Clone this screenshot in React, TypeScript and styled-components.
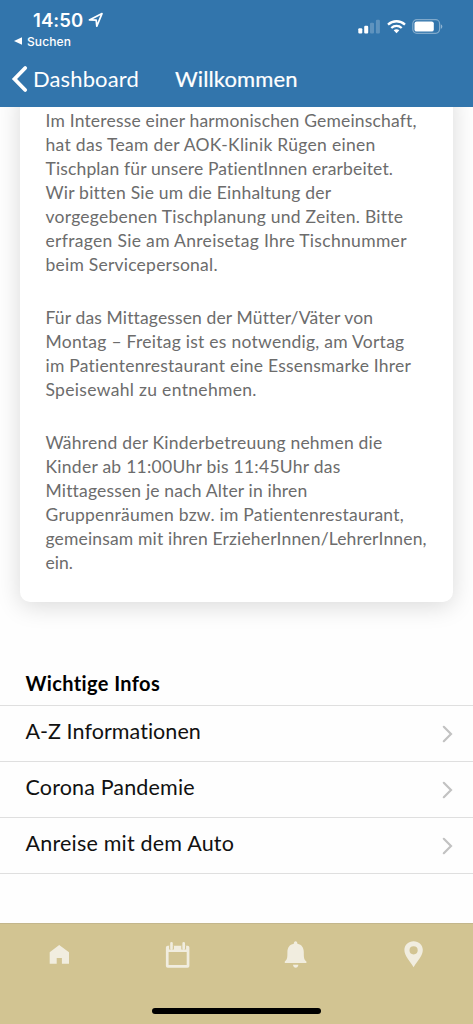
import React from "react";
import styled, { createGlobalStyle } from "styled-components";

const GlobalStyle = createGlobalStyle`
  * { box-sizing: border-box; }
  body { margin: 0; background: #fefefe; font-family: Lato, "Open Sans", sans-serif; }
`;

const Screen = styled.div`
  display: flex;
  flex-direction: column;
  height: 1024px;
  width: 473px;
  overflow: hidden;
  background: #fefefe;
`;

const Header = styled.header`
  flex: none;
  height: 107px;
  background: #3275ac;
  color: #fff;
`;

const StatusBar = styled.div`
  display: flex;
  justify-content: space-between;
  height: 50px;
  padding: 9px 30px 0 14px;
  font-family: Inter, sans-serif;
`;

const Clock = styled.div`
  display: flex;
  align-items: center;
  gap: 5px;
  height: 22px;
  padding-left: 19px;
  font-size: 18.5px;
  font-weight: 600;
  letter-spacing: 0.1px;
`;

const BackToApp = styled.div`
  display: flex;
  align-items: center;
  gap: 5px;
  height: 20px;
  font-size: 12px;
  font-weight: 500;
  letter-spacing: 0.1px;
`;

const StatusIcons = styled.div`
  display: flex;
  align-items: flex-start;
  padding-top: 10px;
  gap: 6px;
`;

const NavBar = styled.nav`
  display: flex;
  align-items: center;
  height: 57px;
  padding: 1px 0 0 11px;
  font-size: 22px;
  line-height: 28px;
`;

const BackLabel = styled.span`
  width: 142px;
  margin-left: 5px;
  letter-spacing: 0.12px;
`;

const Title = styled.h1`
  margin: 0;
  font-size: 22px;
  font-weight: 400;
  letter-spacing: 0.12px;
  -webkit-text-stroke: 0.2px #fff;
`;

const Content = styled.main`
  flex: 1;
  overflow: hidden;
`;

const Card = styled.article`
  margin: -20px 20px 0;
  padding: 22px 0 27px 25.5px;
  border-radius: 10px;
  background: #fff;
  box-shadow: 0 4px 24px rgba(0, 0, 0, 0.15);
`;

const Paragraph = styled.p`
  margin: 0;
  color: #6c6c6c;
  font-size: 17.5px;
  line-height: 24px;
  & + & { margin-top: 29px; }
`;

const Line = styled.span<{ $spacing: number }>`
  display: block;
  white-space: nowrap;
  letter-spacing: ${(p) => p.$spacing}px;
`;

const SectionTitle = styled.h2`
  margin: 67px 0 0;
  padding: 0 0 8px 25.5px;
  height: 37px;
  border-bottom: 1px solid #dfdfdf;
  font-size: 20px;
  font-weight: 700;
  line-height: 28px;
  letter-spacing: 0.38px;
  color: #000;
`;

const LinkRow = styled.div<{ $spacing: number }>`
  display: flex;
  align-items: center;
  justify-content: space-between;
  height: 56px;
  padding: 0 20px 6px 25.5px;
  border-bottom: 1px solid #dfdfdf;
  color: #111;
  font-size: 21.5px;
  letter-spacing: ${(p) => p.$spacing}px;
  svg { margin-top: 6px; }
`;

const TabBar = styled.footer`
  flex: none;
  height: 101px;
  border-top: 1px solid #c3b68c;
  background: #d2c492;
`;

const Tabs = styled.div`
  display: grid;
  grid-template-columns: repeat(4, 1fr);
  height: 84px;
`;

const Tab = styled.div`
  display: flex;
  justify-content: center;
  padding-top: 16px;
  color: #f1eddf;
`;

const HomeIndicator = styled.div`
  width: 169px;
  height: 6px;
  margin: 0 auto;
  border-radius: 3px;
  background: #000;
`;

const paragraphs: [string, number][][] = [
  [
    ["Im Interesse einer harmonischen Gemeinschaft,", 0.18],
    ["hat das Team der AOK-Klinik Rügen einen", 0.3],
    ["Tischplan für unsere PatientInnen erarbeitet.", 0.14],
    ["Wir bitten Sie um die Einhaltung der", 0.22],
    ["vorgegebenen Tischplanung und Zeiten. Bitte", 0.25],
    ["erfragen Sie am Anreisetag Ihre Tischnummer", 0.32],
    ["beim Servicepersonal.", 0.23],
  ],
  [
    ["Für das Mittagessen der Mütter/Väter von", 0.13],
    ["Montag – Freitag ist es notwendig, am Vortag", 0.26],
    ["im Patientenrestaurant eine Essensmarke Ihrer", 0.22],
    ["Speisewahl zu entnehmen.", 0.32],
  ],
  [
    ["Während der Kinderbetreuung nehmen die", 0.22],
    ["Kinder ab 11:00Uhr bis 11:45Uhr das", 0.26],
    ["Mittagessen je nach Alter in ihren", 0.17],
    ["Gruppenräumen bzw. im Patientenrestaurant,", 0.24],
    ["gemeinsam mit ihren ErzieherInnen/LehrerInnen,", 0.16],
    ["ein.", 0],
  ],
];

const links: [string, number][] = [
  ["A-Z Informationen", 0.06],
  ["Corona Pandemie", 0.15],
  ["Anreise mit dem Auto", 0.2],
];

const LocationIcon = () => (
  <svg width="16" height="16" viewBox="0 0 16 16" fill="none" stroke="#fff" strokeWidth="1.7" strokeLinejoin="round">
    <path d="M1.4 7.9 14 1.6 8.8 14.2 8.2 8.2Z" />
  </svg>
);

const SignalIcon = () => (
  <svg width="23" height="15" viewBox="0 0 23 15" fill="#fff">
    <rect x="0.3" y="9.2" width="4" height="5.3" rx="1.1" />
    <rect x="6.2" y="6.8" width="4" height="7.7" rx="1.1" />
    <rect x="12" y="3.8" width="4" height="10.7" rx="1.1" opacity="0.22" />
    <rect x="17.9" y="0.8" width="4" height="13.7" rx="1.1" opacity="0.22" />
  </svg>
);

const WifiIcon = () => (
  <svg width="19" height="15" viewBox="0 0 19 15" fill="none" stroke="#fff" strokeWidth="2.3">
    <path d="M1 5.7C5.8 1.1 13.2 1.1 18 5.7" />
    <path d="M4.3 9C7.3 6.2 11.7 6.2 14.7 9" />
    <path d="M6.7 11.3C8.3 9.9 10.7 9.9 12.3 11.3L9.5 14.2Z" fill="#fff" stroke="none" />
  </svg>
);

const BatteryIcon = () => (
  <svg width="31" height="15" viewBox="0 0 31 15">
    <rect x="0.8" y="0.7" width="26.8" height="13.6" rx="4" fill="none" stroke="#fff" strokeOpacity="0.38" strokeWidth="1.2" />
    <rect x="2.5" y="2.4" width="19.3" height="10.2" rx="2.2" fill="#fff" />
    <path d="M28.8 5.2C30.8 6 30.8 9 28.8 9.8Z" fill="#fff" fillOpacity="0.45" />
  </svg>
);

const BackIcon = () => (
  <svg width="17" height="28" viewBox="0 0 17 28" fill="none" stroke="#fff" strokeWidth="3.8" strokeLinecap="round" strokeLinejoin="miter">
    <path d="M14.2 3 3.5 14 14.2 25" />
  </svg>
);

const ChevronIcon = () => (
  <svg width="11" height="18" viewBox="0 0 11 18" fill="none" stroke="#c2c2c2" strokeWidth="2.2" strokeLinecap="round">
    <path d="M1.8 1.8 9 9 1.8 16.2" />
  </svg>
);

const HomeIcon = () => (
  <svg width="30" height="30" viewBox="0 0 30 30" fill="currentColor">
    <path d="M15.2 5 25 12.2V23.7H17.9V18H12.7V23.7H5.7V12.2Z" />
  </svg>
);

const CalendarIcon = () => (
  <svg width="30" height="30" viewBox="-0.7 0 30 30">
    <path
      fill="currentColor"
      fillRule="evenodd"
      d="M5 5.7H25Q26.7 5.7 26.7 7.4V26Q26.7 27.7 25 27.7H5Q3.2 27.7 3.2 26V7.4Q3.2 5.7 5 5.7ZM5.9 12V25H24V12Z"
    />
    <path d="M8.8 5.5V9.5M21 5.5V9.5" stroke="#d2c492" strokeWidth="4.8" />
    <path d="M8.8 3.3V8.6M21 3.3V8.6" stroke="currentColor" strokeWidth="2.6" strokeLinecap="round" />
  </svg>
);

const BellIcon = () => (
  <svg width="30" height="30" viewBox="0 0 30 30" fill="currentColor">
    <path d="M14.6 1.2C15.8 1.2 16.3 2 16.4 3.8C20.8 4.5 22.8 8 22.8 12.2C22.8 18 23 19.3 25.4 21.6V23H3.8V21.6C6.2 19.3 6.4 18 6.4 12.2C6.4 8 8.4 4.5 12.8 3.8C12.9 2 13.4 1.2 14.6 1.2Z" />
    <path d="M12 24.7H17.4C17.1 28.7 12.3 28.7 12 24.7Z" />
  </svg>
);

const PinIcon = () => (
  <svg width="30" height="30" viewBox="0 0 30 30" fill="currentColor">
    <path
      fillRule="evenodd"
      d="M14.6 1.2C9.4 1.2 5.4 5 5.4 10C5.4 15.5 10 20 14.6 27.2C19.2 20 23.8 15.5 23.8 10C23.8 5 19.8 1.2 14.6 1.2ZM14.6 6.2A4.1 4.1 0 1 1 14.6 14.4A4.1 4.1 0 1 1 14.6 6.2Z"
    />
  </svg>
);

export default function App() {
  return (
    <Screen>
      <GlobalStyle />
      <Header>
        <StatusBar>
          <div>
            <Clock>
              14:50
              <LocationIcon />
            </Clock>
            <BackToApp>
              <svg width="8" height="8" viewBox="0 0 8 8" fill="#fff">
                <path d="M0 4 8 0.3V7.7Z" />
              </svg>
              Suchen
            </BackToApp>
          </div>
          <StatusIcons>
            <SignalIcon />
            <WifiIcon />
            <BatteryIcon />
          </StatusIcons>
        </StatusBar>
        <NavBar>
          <BackIcon />
          <BackLabel>Dashboard</BackLabel>
          <Title>Willkommen</Title>
        </NavBar>
      </Header>
      <Content>
        <Card>
          {paragraphs.map((lines, i) => (
            <Paragraph key={i}>
              {lines.map(([text, spacing]) => (
                <Line key={text} $spacing={spacing}>{text}</Line>
              ))}
            </Paragraph>
          ))}
        </Card>
        <SectionTitle>Wichtige Infos</SectionTitle>
        {links.map(([text, spacing]) => (
          <LinkRow key={text} $spacing={spacing}>
            {text}
            <ChevronIcon />
          </LinkRow>
        ))}
      </Content>
      <TabBar>
        <Tabs>
          <Tab><HomeIcon /></Tab>
          <Tab><CalendarIcon /></Tab>
          <Tab><BellIcon /></Tab>
          <Tab><PinIcon /></Tab>
        </Tabs>
        <HomeIndicator />
      </TabBar>
    </Screen>
  );
}
